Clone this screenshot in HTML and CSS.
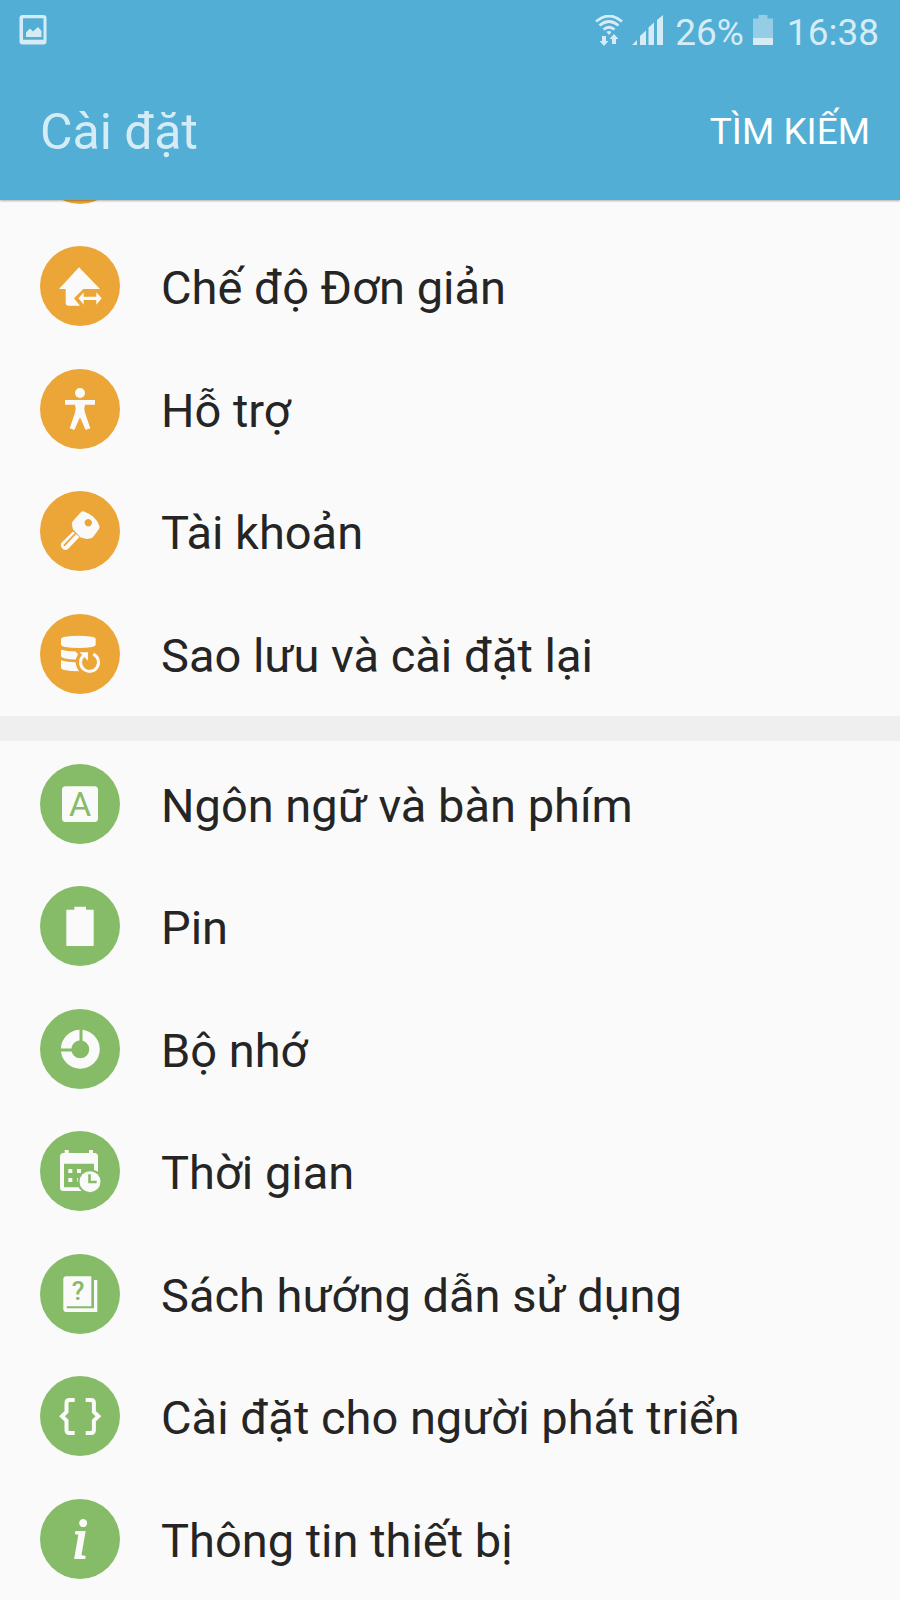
FILE: index.html
```html
<!DOCTYPE html>
<html lang="vi">
<head>
    <meta charset="UTF-8">
    <meta name="viewport" content="width=device-width, initial-scale=1.0">
    <title>Cài đặt</title>
    <link rel="stylesheet" href="styles.css">
</head>
<body>
    <header class="header">
        <div class="status-bar">
            <svg class="status-picture" width="28" height="34" viewBox="0 0 28 34">
                <path fill-rule="evenodd" d="M3.500 0h21q3 0 3 3v23.500q0 3-3 3h-21q-3 0-3-3V3q0-3 3-3zM4 3.200v21.500h20.500V3.200z"/>
                <path d="M7 22v-4.500l4-4 3 3 5-4.500 3.500 4v.500V22z"/>
            </svg>
            <svg class="status-wifi" width="28" height="34" viewBox="0 0 28 34">
                <g fill="none" stroke="currentColor" stroke-width="2.800">
                    <path d="M1 6.500Q14-4.500 27 6.500"/>
                    <path d="M4.500 10.500Q14 2.500 23.500 10.500"/>
                    <path d="M8.500 14.500Q14 10 19.500 14.500"/>
                </g>
                <path d="M11.500 17q2.500-2 5 0L14 20z"/>
                <path d="M7 21h4v5h2.500L9 31l-4.500-5H7z"/>
                <path d="M17 29h4v-5h2.500L19 19l-4.500 5H17z"/>
            </svg>
            <svg class="status-signal" width="32" height="34" viewBox="0 0 32 34">
                <path d="M0 30l5-5v5zM8 30v-9l6-5.500V30zM16.500 30V12.500l5.500-5V30zM25 30V5l6-5v30z"/>
            </svg>
            <span class="battery-level">26%</span>
            <svg class="status-battery" width="20" height="34" viewBox="0 0 20 34">
                <path opacity=".5" d="M0 3.500h5.500V0h9v3.500H20V23H0z"/>
                <path d="M0 23h20v7H0z"/>
            </svg>
            <span class="clock">16:38</span>
        </div>
        <div class="action-bar">
            <h1 class="title">Cài đặt</h1>
            <button class="search-btn" type="button">TÌM KIẾM</button>
        </div>
    </header>

    <main>
        <nav class="group personal">
            <!-- Scrolled under the header -->
            <div class="item"><span class="icon"></span></div>
            <a class="item" href="#easy-mode">
                <svg class="icon" viewBox="0 0 80 80">
                    <path d="M39 21.300L60 43H43.300L34 52.300l6 7.400H28.500q-2.800 0-2.800-3V43H19z"/>
                    <path d="M38.500 52.300l5.200-6v4.400h12.600v-4.400l5.400 6-5.400 6.400V54H43.700v4.700z"/>
                </svg>
                <span class="label">Chế độ Đơn giản</span>
            </a>
            <a class="item" href="#accessibility">
                <svg class="icon" viewBox="0 0 80 80">
                    <circle cx="40" cy="24" r="5"/>
                    <path d="M25 31h30v4.700H45q-1.300 4 0 8l5.300 15.600-4.600 1.700L40 48.300 34.300 61l-4.600-1.700L35 43.700q1.300-4 0-8H25z"/>
                </svg>
                <span class="label">Hỗ trợ</span>
            </a>
            <a class="item" href="#accounts">
                <svg class="icon" viewBox="0 0 80 80">
                    <path fill-rule="evenodd" d="M41 21q1.300-1 3-.500 4.500 1.500 8.700 4.800 4.800 4 6.700 9.700.500 1.500-.500 3l-5 7q-1.200 1.700-3 2.200-2.200.800-4.200.800l-6-1.500-7-7.500q-1.200-1-1.200-2.500l-.700-3.500q0-1.700 1-2.800zM48.300 28a3.700 3.700 0 1 0 .01 0z"/>
                    <path d="M33 40.500L21.800 51.500q-2 2.700 0 5.500 3 3.200 6.200 1L39.500 46z"/>
                    <path class="cut" stroke-width="1.800" stroke-linecap="round" d="M35 43L24.500 54.200"/>
                </svg>
                <span class="label">Tài khoản</span>
            </a>
            <a class="item" href="#backup">
                <svg class="icon" viewBox="0 0 80 80">
                    <path d="M21 25q0-1.500 4-2.300 13.500-2 27 0 3.700.800 3.700 2.300v5.500q0 1.700-3.700 2.500-13.500 2.200-27 0-4-.800-4-2.500z"/>
                    <path d="M21 35.700q6 1.800 14.500 1.800l2.500 2.500-2.300 5.500q-6.200 0-11.700-1.200-3-.800-3-2.300z"/>
                    <path d="M21 46.300q6 2 14.500 2 .500 5.300 3.500 9-8.500 0-15-1.200-3-.800-3-2.300z"/>
                    <path class="line" stroke-width="3" d="M53.300 40.200A9 9 0 1 1 44 41.300"/>
                    <path d="M39.500 38.300H48v8.500z"/>
                </svg>
                <span class="label">Sao lưu và cài đặt lại</span>
            </a>
        </nav>

        <nav class="group system">
            <a class="item" href="#language">
                <svg class="icon" viewBox="0 0 80 80">
                    <rect x="22" y="22.300" width="36" height="35.700" rx="3.500"/>
                    <text class="glyph-a" x="40" y="52">A</text>
                </svg>
                <span class="label">Ngôn ngữ và bàn phím</span>
            </a>
            <a class="item" href="#battery">
                <svg class="icon" viewBox="0 0 80 80">
                    <path d="M26.300 23.700h8v-3H46v3h7.700V60H26.300z"/>
                </svg>
                <span class="label">Pin</span>
            </a>
            <a class="item" href="#storage">
                <svg class="icon" viewBox="0 0 80 80">
                    <circle class="line" cx="40.300" cy="40.300" r="14.200" stroke-width="10.500"/>
                    <path class="cut" stroke-width="3" d="M41 18v16M18 41h16"/>
                </svg>
                <span class="label">Bộ nhớ</span>
            </a>
            <a class="item" href="#date">
                <svg class="icon" viewBox="0 0 80 80">
                    <path fill-rule="evenodd" d="M24.700 19h4v3H49v-3h4v3h1.500q3.500 0 3.500 3.500V60H23.500Q20 60 20 56.500v-31Q20 22 23.500 22h1.200zM24 32.700v23.600h30V32.700z"/>
                    <path d="M28.300 38h4v4h-4zM37 38h4v4h-4zM28.300 47h4v4h-4zM37 47h4v4h-4z"/>
                    <circle class="cut-fill" cx="50" cy="50.700" r="12.500"/>
                    <path class="cut-fill" d="M50 55h12v8H40z"/>
                    <circle cx="50" cy="50.700" r="10.500"/>
                    <path class="cut" stroke-width="2.600" d="M49.500 43.300v7.700h7.200"/>
                </svg>
                <span class="label">Thời gian</span>
            </a>
            <a class="item" href="#manual">
                <svg class="icon" viewBox="0 0 80 80">
                    <path d="M26.300 22.300h25v29.900H27.500q-1 0-1 1t1 1H54V26h3.300v32h-31q-3 0-3-3V25.300q0-3 3-3z"/>
                    <text class="glyph-help" x="38" y="46">?</text>
                </svg>
                <span class="label">Sách hướng dẫn sử dụng</span>
            </a>
            <a class="item" href="#developer">
                <svg class="icon" viewBox="0 0 80 80">
                    <path class="line" stroke-width="4" d="M34.700 24H29.500q-3 0-3 3v9L22 40.300l4.500 4.300V54q0 3 3 3h5.200"/>
                    <path class="line" stroke-width="4" d="M45.700 24h5.200q3 0 3 3v9l4.500 4.300-4.500 4.300V54q0 3-3 3h-5.200"/>
                </svg>
                <span class="label">Cài đặt cho người phát triển</span>
            </a>
            <a class="item" href="#about">
                <svg class="icon" viewBox="0 0 80 80">
                    <text class="glyph-info" x="40" y="59">i</text>
                </svg>
                <span class="label">Thông tin thiết bị</span>
            </a>
        </nav>
    </main>
</body>
</html>
```
FILE: styles.css
```css
* {
    margin: 0;
    padding: 0;
    box-sizing: border-box;
}

body {
    background: #fafafa;
    color: #252525;
    font-family: Roboto, sans-serif;
}

.header {
    position: relative;
    z-index: 1;
    background: #52aed4;
    color: #d5ecf6;
    box-shadow: 0 1px 2px rgba(0, 0, 0, 0.3);
}

.status-bar {
    display: flex;
    align-items: center;
    height: 64px;
    padding: 0 21px 0 19px;
    font-size: 37px;
}

.status-bar svg {
    fill: currentColor;
    flex-shrink: 0;
}

.status-wifi {
    margin-left: auto;
}

.status-signal {
    margin: 0 11px 0 9px;
}

.status-battery {
    margin: 0 14px 0 9px;
}

.action-bar {
    display: flex;
    justify-content: space-between;
    align-items: center;
    height: 136px;
    padding: 0 30px 0 40px;
}

.title {
    font-size: 50px;
    font-weight: 400;
}

.search-btn {
    padding-bottom: 2px;
    background: none;
    border: none;
    color: #fff;
    font-family: inherit;
    font-size: 37px;
    cursor: pointer;
}

.group {
    padding-top: 2px;
}

/* The list is scrolled, its first row sits behind the header */
.personal {
    --tint: #eba637;
    margin-top: -99px;
}

.system {
    --tint: #86bc67;
    margin-top: 1px;
    border-top: 25px solid #efefef;
}

.item {
    display: flex;
    align-items: center;
    gap: 41px;
    padding: 21px 40px;
    color: inherit;
    text-decoration: none;
}

.item:nth-child(even) {
    padding-bottom: 22px;
}

.icon {
    flex-shrink: 0;
    width: 80px;
    height: 80px;
    border-radius: 50%;
    background: var(--tint);
    fill: #fafafa;
}

.icon .line {
    fill: none;
    stroke: #fafafa;
}

.icon .cut {
    fill: none;
    stroke: var(--tint);
}

.icon .cut-fill {
    fill: var(--tint);
}

.icon text {
    text-anchor: middle;
}

.icon .glyph-a {
    fill: var(--tint);
    font-size: 34px;
}

.icon .glyph-help {
    fill: var(--tint);
    font-size: 26px;
    font-weight: 500;
}

.icon .glyph-info {
    stroke: #fafafa;
    stroke-width: 2px;
    font-family: "Liberation Serif", serif;
    font-size: 56px;
    font-style: italic;
}

.label {
    padding-top: 3px;
    font-size: 47px;
    line-height: 56px;
}
```
